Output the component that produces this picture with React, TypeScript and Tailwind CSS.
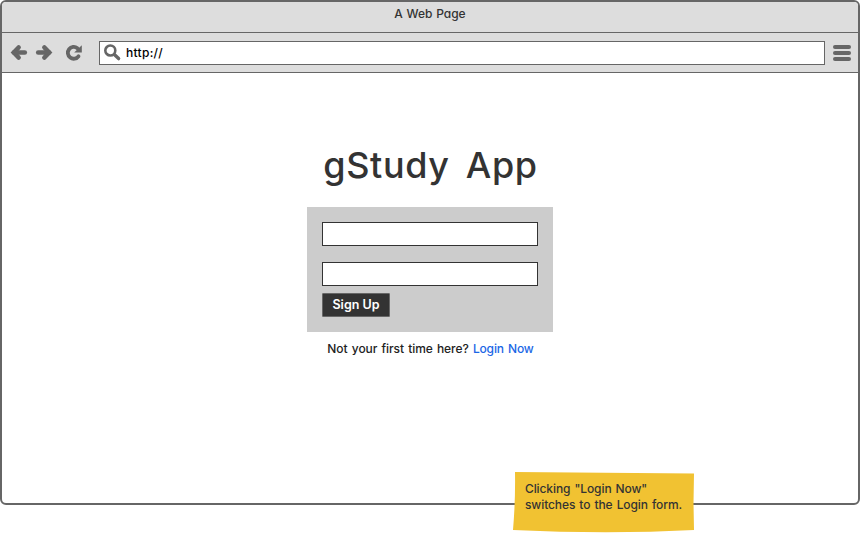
function BackArrow({ flip = false }: { flip?: boolean }) {
  return (
    <svg width="18" height="18" viewBox="0 0 18 18" className={flip ? "-scale-x-100" : ""} fill="none" stroke="#666" strokeWidth="4.6" strokeLinecap="round">
      <path d="M8.6 3.5 3.8 8.5 8.6 13.5" strokeLinejoin="miter" />
      <path d="M4 8.5h10.8" />
    </svg>
  );
}

function Reload() {
  return (
    <svg width="18" height="18" viewBox="0 0 18 18" fill="none">
      <path d="M12.4 4.2A5.9 5.9 0 1 0 13.5 12.3" stroke="#666" strokeWidth="3.8" strokeLinecap="round" />
      <path d="M16.8 1.2V8.6H9.2Z" fill="#666" />
    </svg>
  );
}

function Search() {
  return (
    <svg width="18" height="18" viewBox="0 0 18 18" fill="none" stroke="#666" strokeLinecap="round">
      <circle cx="6.3" cy="6.5" r="5" strokeWidth="2.6" />
      <path d="M10.6 10.8l4 3.8" strokeWidth="3.4" />
    </svg>
  );
}

function Menu() {
  return (
    <div className="flex w-[18px] flex-col gap-[2px]">
      <div className="h-1 rounded-full bg-[#666]" />
      <div className="h-1 rounded-full bg-[#666]" />
      <div className="h-1 rounded-full bg-[#666]" />
    </div>
  );
}

export default function App() {
  return (
    <div className="relative h-[535px] w-[860px] overflow-hidden bg-white font-['Inter','Liberation_Sans',sans-serif] text-[12px] font-medium leading-4 text-[#222] [font-feature-settings:'cv11']">
      <div className="flex h-[505px] w-full flex-col overflow-hidden rounded-[6px] border-2 border-[#666]">
        <div className="flex h-[31px] shrink-0 justify-center border-b border-[#666] bg-[#ddd] pt-[4px]">
          <span className="text-[#333] [word-spacing:0.5px]">A Web Page</span>
        </div>
        <div className="flex h-10 shrink-0 items-center border-b border-[#666] bg-[#ddd] pl-2 pr-[7px]">
          <BackArrow />
          <div className="ml-[7px]"><BackArrow flip /></div>
          <div className="ml-[12px]"><Reload /></div>
          <div className="ml-[16px] flex h-6 w-[726px] items-center border border-[#666] bg-white pl-1">
            <Search />
            <span className="ml-1 pt-px tracking-[0.3px] text-black">http://</span>
          </div>
          <div className="ml-auto"><Menu /></div>
        </div>
        <main className="flex flex-1 flex-col items-center pt-[68px]">
          <h1 className="h-[66px] whitespace-nowrap pl-px text-[36px] font-medium leading-[48px] tracking-[0.6px] text-[#333] [word-spacing:6px]">gStudy App</h1>
          <form className="flex h-[125px] w-[246px] flex-col items-start bg-[#ccc] px-[15px] pt-[15px]">
            <input className="h-6 w-full border border-[#333] bg-white" />
            <input className="mt-4 h-6 w-full border border-[#333] bg-white" />
            <button type="button" className="mt-[7px] h-6 w-[68px] rounded-[1px] border border-[#666] bg-[#333] text-[12.5px] font-semibold leading-4 text-white">Sign Up</button>
          </form>
          <p className="mt-[9px] whitespace-nowrap pl-px tracking-[-0.07px] [word-spacing:1.1px]">
            Not your first time here? <a className="tracking-[-0.15px] text-[#1a66e6]">Login Now</a>
          </p>
        </main>
      </div>
      <aside className="absolute left-[512px] top-[471px] h-[62px] w-[183px]">
        <svg width="183" height="62" className="absolute inset-0">
          <path d="M3 1 182 2.5 181.5 32 182 59Q96 63.5 1 59Q3.5 30 3 1Z" fill="#f1c232" />
        </svg>
        <p className="relative whitespace-nowrap pl-[13px] pt-[10px] tracking-[-0.1px] text-[#333] [word-spacing:1px]">
          Clicking "Login Now"<br />switches to the Login form.
        </p>
      </aside>
    </div>
  );
}
